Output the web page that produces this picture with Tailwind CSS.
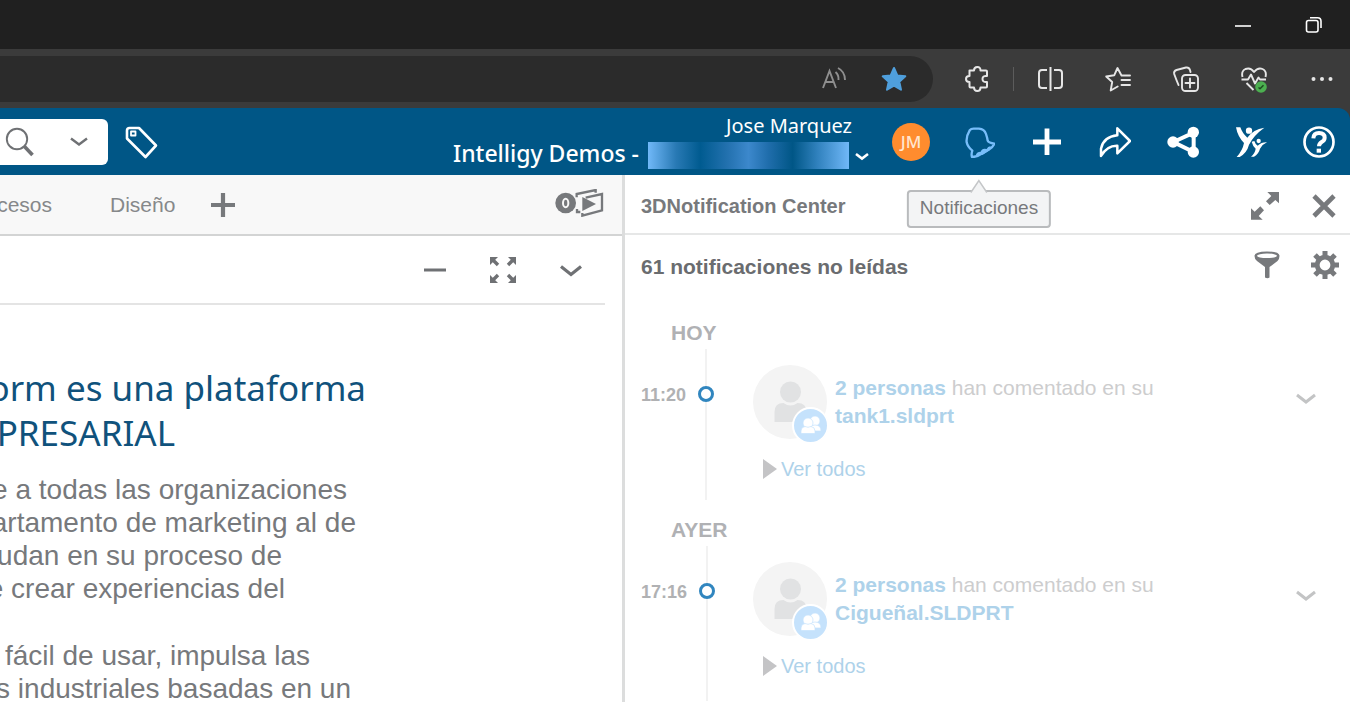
<!DOCTYPE html>
<html lang="es">
<head>
<meta charset="utf-8">
<meta name="viewport" content="width=device-width, initial-scale=1">
<title>3DNotification Center</title>
<script src="https://cdn.jsdelivr.net/npm/@tailwindcss/browser@4"></script>
</head>
<body class="flex h-screen flex-col overflow-hidden bg-white font-['Liberation_Sans',Arial,sans-serif] text-[21px] text-[#77797c]">

<!-- Window title bar -->
<div class="flex h-[49px] shrink-0 items-center justify-end bg-[#202020] text-white">
  <button aria-label="Minimizar" class="flex w-[70px] justify-center"><svg class="size-5" viewBox="0 0 20 20" fill="none" stroke="currentColor" stroke-width="1.6"><path d="M2 11h16"/></svg></button>
  <button aria-label="Restaurar" class="flex w-[72px] justify-center"><svg class="size-5" viewBox="0 0 20 20" fill="none" stroke="currentColor" stroke-width="1.6"><rect x="2.500" y="5.500" width="11.500" height="11.500" rx="2"/><path d="M6 2.800h7.500q3.500 0 3.500 3.500V13"/></svg></button>
</div>

<!-- Browser toolbar -->
<div class="flex h-[59px] shrink-0 items-center bg-[#3b3b3b] text-[#e6e6e6]">
  <div class="mr-4 flex h-[46px] flex-1 items-center justify-end gap-8 rounded-r-full bg-[#2b2b2b] pr-[25px]">
    <button aria-label="Leer en voz alta" class="text-[#8f8f8f]"><svg class="size-7" viewBox="0 0 28 28" fill="none" stroke="currentColor" stroke-width="1.900"><path d="M3 23 9.500 6 16 23M5.500 17h8M15.500 7q3.500 3 3 8M18 3q7 3.500 7 12"/></svg></button>
    <button aria-label="Favorito" class="text-[#4f9fdc]"><svg class="size-7" viewBox="0 0 28 28" fill="currentColor" stroke="currentColor" stroke-width="2" stroke-linejoin="round"><path d="m14 3 3.300 7.400 8 .9-6 5.400 1.700 8L14 20.700l-7 4 1.700-8-6-5.400 8-.9z"/></svg></button>
  </div>
  <button aria-label="Extensiones" class="flex w-14 justify-center"><svg class="size-7" viewBox="0 0 28 28" fill="none" stroke="currentColor" stroke-width="2" stroke-linejoin="round"><path d="M6.500 5.500H11q0-3.500 3.300-3.500t3.200 3.500h5.500q1 0 1 1V11q-4.500-.5-4.500 3t4.500 3v4.500q0 1-1 1h-5.500q0 3.500-3.200 3.500T11 22.500H7.500q-1 0-1-1V17Q3 17 3 14t3.500-3z"/></svg></button>
  <div class="mx-2 h-6 w-px bg-[#5c5c5c]"></div>
  <div class="flex gap-3">
    <button aria-label="Pantalla dividida" class="flex w-14 justify-center"><svg class="size-7" viewBox="0 0 28 28" fill="none" stroke="currentColor" stroke-width="2"><path d="M14.500 2v24M11 5H6Q3 5 3 8v12q0 3 3 3h5M18 5h5q3 0 3 3v12q0 3-3 3h-5"/></svg></button>
    <button aria-label="Favoritos" class="flex w-14 justify-center"><svg class="size-7" viewBox="0 0 28 28" fill="none" stroke="currentColor" stroke-width="1.900" stroke-linejoin="round" stroke-linecap="round"><path d="M26 10.500h-8.500L13.500 3l-3.300 7.300-8 1.200 6 5.500-1.500 8.500 7-4M17.500 15H26M17.500 20H26"/></svg></button>
    <button aria-label="Colecciones" class="flex w-14 justify-center"><svg class="size-7" viewBox="0 0 28 28" fill="none" stroke="currentColor" stroke-width="1.900" stroke-linejoin="round" stroke-linecap="round"><path d="M6.500 20Q4 14 2.200 9 1.500 6 4.500 5l9.500-2.500q3-.5 4 2.500l.5 2"/><rect x="10" y="10" width="16" height="16" rx="3.500"/><path d="M18 13.500v9M13.500 18h9"/></svg></button>
    <button aria-label="Rendimiento" class="flex w-14 justify-center"><svg class="size-7" viewBox="0 0 28 28" fill="none" stroke="currentColor" stroke-width="1.900" stroke-linejoin="round"><path d="M2.500 12Q1 6 5.500 4 10.500 2 14 7q4-5 8.500-3T25.500 12M1.500 14.500H8l3-5 4 9 3.500-6 1.500 2h6M6.500 18l7 7"/><circle cx="21" cy="22" r="5.800" fill="#4caf50" stroke="none"/><path d="m18.500 22.500 1.500 1.300 3.500-3.600" stroke="#1d4d20" stroke-width="1.500"/></svg></button>
    <button aria-label="Más opciones" class="flex w-14 justify-center"><svg class="size-7" viewBox="0 0 28 28" fill="currentColor"><circle cx="5.500" cy="14" r="2"/><circle cx="14" cy="14" r="2"/><circle cx="22.500" cy="14" r="2"/></svg></button>
  </div>
</div>

<!-- Platform top bar -->
<header class="flex h-[67px] shrink-0 items-center bg-[#3b3b3b]">
  <div class="flex h-full flex-1 items-center rounded-tr-xl bg-[#005686] text-white">
    <div class="flex h-[46px] w-[108px] items-center gap-[34px] rounded-r-md bg-white pl-1 text-[#6f7174]">
      <button aria-label="Buscar"><svg class="size-8" viewBox="0 0 32 32" fill="none" stroke="currentColor"><circle cx="13" cy="13" r="10.200" stroke-width="1.900"/><path d="m20.500 20.500 8 8.500" stroke-width="3.600"/></svg></button>
      <button aria-label="Opciones de búsqueda"><svg class="h-3 w-[18px]" viewBox="0 0 18 12" fill="none" stroke="currentColor" stroke-width="2.400"><path d="m1 2.500 8 6 8-6"/></svg></button>
    </div>
    <button aria-label="Etiquetas" class="ml-4"><svg class="size-[34px]" viewBox="0 0 34 34" fill="none" stroke="currentColor" stroke-width="2.600" stroke-linejoin="round"><path d="M3 5.500Q3 3 5.500 3H15l17 17.500L21.500 32 3 13.500z"/><rect x="7" y="6.500" width="4.500" height="4" stroke-width="1.800"/></svg></button>

    <div class="ml-auto font-['Noto_Sans','Open_Sans',sans-serif]">
      <div class="pr-[17px] text-right text-[20px] leading-6">Jose Marquez</div>
      <button class="mt-1 flex items-center text-[23px] font-medium">
        <span class="self-start leading-[23px]">Intelligy Demos -</span>
        <span class="ml-[9px] h-[27px] w-[201px] bg-[linear-gradient(90deg,#70b8f8_0%,#2879b4_14%,#005b90_26%,#2472b0_40%,#3c88cc_50%,#1f6dab_60%,#005686_72%,#2f80bc_84%,#70b8f8_100%)]"></span>
        <svg class="ml-[6px] h-3 w-[14px]" viewBox="0 0 14 12" fill="none" stroke="currentColor" stroke-width="2.600"><path d="m1 4 6 4.500L13 4"/></svg>
      </button>
    </div>

    <nav aria-label="Acciones" class="ml-[11px] flex gap-1.5">
      <button aria-label="Perfil" class="flex h-[38px] w-[62px] items-center justify-center"><span class="flex size-[38px] items-center justify-center rounded-full bg-[#ff8c2e] font-['Noto_Sans',sans-serif] text-[17px] font-medium text-[#ffe6d0]">JM</span></button>
      <div class="relative flex">
        <button aria-label="Notificaciones" aria-describedby="tip" class="flex w-[62px] items-center justify-center text-[#78befa]"><svg class="size-8" viewBox="0 0 96 96" fill="none" stroke="currentColor" stroke-width="7" stroke-linejoin="round"><path d="M20 13q4-5 12-5h16q16 1 21 16 4 12 5 20 2 6 20 9-4 10-14 16L57 83Q43 93 27 93q-3-8 1-19-14-11-17-25-2-18 9-36z"/><path d="M38 89q2-12 15-12 4-12 18-8 4-9 12-8l-3 12-21 13z" fill="currentColor" stroke="none"/></svg></button>
        <div id="tip" role="tooltip" class="absolute top-[67px] left-1/2 z-10 flex h-[38px] -translate-x-1/2 items-center rounded-sm border-2 border-[#b9bbbd] bg-[#f3f4f5] px-[11px] text-[19px] text-[#77797c]">
          Notificaciones
          <svg class="absolute -top-[13px] left-1/2 h-[14px] w-[18px] -translate-x-1/2" viewBox="0 0 18 14" fill="#f3f4f5" stroke="#c4c6c8" stroke-width="1.500"><path d="M1 13.500 9 1.500l8 12"/></svg>
        </div>
      </div>
      <button aria-label="Añadir" class="flex w-[62px] items-center justify-center"><svg class="size-8" viewBox="0 0 32 32" stroke="currentColor" stroke-width="4.800"><path d="M16 2.500v26.500M2 16h28"/></svg></button>
      <button aria-label="Compartir" class="flex w-[62px] items-center justify-center"><svg class="size-8" viewBox="0 0 96 96" fill="none" stroke="currentColor" stroke-width="7.500" stroke-linejoin="round"><path d="M6 90V68Q14 32 55 28V7l38 38-38 37V59Q24 58 6 90z"/></svg></button>
      <button aria-label="Comunidad" class="flex w-[62px] items-center justify-center"><svg class="size-8" viewBox="0 0 96 96" fill="currentColor" stroke="currentColor" stroke-width="12"><g stroke="none"><circle cx="18" cy="48" r="17"/><circle cx="79" cy="19" r="17"/><circle cx="79" cy="78" r="17"/></g><path d="M19 48 80 20v58z" fill="none"/></svg></button>
      <button aria-label="Social" class="flex w-[62px] items-center justify-center"><svg class="size-8" viewBox="0 0 96 96" fill="currentColor"><path d="M3 4h13q6 18 21 31Q54 10 88 5 56 28 42 56 36 80 14 93H5q18-20 22-42Q8 32 3 4z"/><circle cx="42" cy="14" r="9.500"/><path d="M50 47l8-2q3 10 10 14 12-11 28-10-14 6-21 19-4 16-18 24h-9q12-10 14-24-8-6-12-21z"/><circle cx="71" cy="45" r="6.500"/></svg></button>
      <button aria-label="Ayuda" class="flex w-[62px] items-center justify-center"><svg class="size-8" viewBox="0 0 96 96" fill="none" stroke="currentColor"><circle cx="48" cy="48" r="43.500" stroke-width="8"/><path d="M31 37q1-16 17-16 17 0 17 14 0 8-9 13-8 5-8 13" stroke-width="12"/><path d="M41 68h13v12H41z" fill="currentColor" stroke="none"/></svg></button>
    </nav>
  </div>
</header>

<div class="flex min-h-0 flex-1">
  <!-- Dashboard -->
  <main class="flex w-[625px] shrink-0 flex-col overflow-hidden border-r-[3px] border-[#dcdddd]">
    <div class="flex h-[61px] shrink-0 items-center border-b-2 border-[#d3d4d4] bg-[#f8f8f8] text-[#86888a]">
      <a href="#" class="flex w-[52px] justify-end">cesos</a>
      <a href="#" class="ml-[58px]">Diseño</a>
      <button aria-label="Nueva pestaña" class="ml-[34px]"><svg class="size-7" viewBox="0 0 28 28" stroke="#77797c" stroke-width="4.200"><path d="M14 2v24M2 14h24"/></svg></button>
      <button aria-label="Reproducir" class="mr-[17px] mb-1 ml-auto"><svg class="h-7 w-[50px]" viewBox="0 0 150 84" fill="none" stroke="#77797c"><circle cx="32" cy="42" r="31" fill="#77797c" stroke="none"/><ellipse cx="32" cy="42" rx="8" ry="13" stroke="#f8f8f8" stroke-width="6"/><path d="M65 25V15l57-12v8M66 60v9h10M92 26l49-11v49L82 80v-8" stroke-width="7"/><path d="M82 24v42l41-21z" fill="#77797c" stroke="none"/></svg></button>
    </div>
    <div class="mr-[17px] flex h-[69px] shrink-0 items-center justify-end border-b-2 border-[#e4e4e4] text-[#6f7174]">
      <button aria-label="Contraer" class="flex w-[68px] justify-center"><svg class="size-7" viewBox="0 0 28 28" stroke="currentColor" stroke-width="3"><path d="M3 14h22"/></svg></button>
      <button aria-label="Maximizar" class="flex w-[68px] justify-center"><svg class="size-7" viewBox="0 0 28 28" fill="currentColor" stroke="currentColor" stroke-width="3.400"><path d="m3 3 6 6M25 3l-6 6M3 25l6-6M25 25l-6-6" fill="none"/><path d="M1 1h8L1 9zM27 1h-8l8 8zM1 27h8l-8-8zM27 27h-8l8-8z" stroke="none"/></svg></button>
      <button aria-label="Menú del widget" class="flex w-[68px] justify-center"><svg class="size-6" viewBox="0 0 24 24" fill="none" stroke="currentColor" stroke-width="3.200"><path d="m2 8.500 10 8 10-8"/></svg></button>
    </div>
    <article class="pt-[60px] whitespace-nowrap">
      <h1 class="font-['Noto_Sans','Open_Sans',sans-serif] text-[35px] leading-[45px] text-[#10527c]">
        <span class="flex w-[366px] justify-end">orm es una plataforma</span>
        <span class="flex w-[175px] justify-end">PRESARIAL</span>
      </h1>
      <p class="mt-[18px] text-[28px] leading-[33px]">
        <span class="flex w-[347px] justify-end">e a todas las organizaciones</span>
        <span class="flex w-[356px] justify-end">artamento de marketing al de</span>
        <span class="flex w-[282px] justify-end">udan en su proceso de</span>
        <span class="flex w-[285px] justify-end">e crear experiencias del</span>
      </p>
      <p class="mt-[34px] text-[28px] leading-[33px]">
        <span class="flex w-[310px] justify-end">y fácil de usar, impulsa las</span>
        <span class="flex w-[351px] justify-end">s industriales basadas en un</span>
      </p>
    </article>
  </main>

  <!-- Notification panel -->
  <aside class="flex min-w-0 flex-1 flex-col overflow-hidden">
    <div class="flex h-[60px] shrink-0 items-center border-b-2 border-[#e6e7e7] pt-[3px] pl-4">
      <h2 class="text-[20px] font-bold">3DNotification Center</h2>
      <button aria-label="Ampliar" class="mr-8 ml-auto"><svg class="size-[30px]" viewBox="0 0 90 90" fill="currentColor"><path d="M52 3h35v34L76 27 59 42 48 31l16-16zM38 86H3V52l11 10 17-16 11 12-16 17z"/></svg></button>
      <button aria-label="Cerrar" class="mr-[14px]"><svg class="size-6" viewBox="0 0 24 24" stroke="currentColor" stroke-width="4.600"><path d="m2 2 20 20M22 2 2 22"/></svg></button>
    </div>
    <div class="flex h-16 shrink-0 items-center pl-4">
      <p class="font-bold text-[#6a6c6f]">61 notificaciones no leídas</p>
      <button aria-label="Filtrar" class="mr-[30px] mb-1 ml-auto"><svg class="size-7" viewBox="0 0 28 28"><path d="M1.500 5q0-4.500 12.500-4.500T26.500 5q0 3-2 5l-8 6v10.500q-2 1.500-4.500 0V16L4 10Q1.500 8 1.500 5z" fill="currentColor"/><ellipse cx="14" cy="4.800" rx="10" ry="2.300" fill="#fff"/></svg></button>
      <button aria-label="Ajustes" class="mr-[11px] mb-1"><svg class="size-7" viewBox="0 0 28 28" fill="none" stroke="currentColor"><circle cx="14" cy="14" r="7.800" stroke-width="4.800"/><path d="M14 0v5M14 23v5M0 14h5M23 14h5M4 4l4 4M20 20l4 4M24 4l-4 4M8 20l-4 4" stroke-width="5"/></svg></button>
    </div>

    <section class="mt-[22px] shrink-0 pb-[18px]">
      <h3 class="pl-[46px] leading-6 font-bold text-[#b0b1b4]">HOY</h3>
      <div class="relative mt-1 flex h-[151px] items-start pt-4 pl-4">
        <div class="absolute inset-y-0 left-[80px] w-0.5 bg-[#f2f2f2]"></div>
        <time class="mt-[18px] w-[57px] text-[18px] leading-6 font-bold text-[#b0b1b3]">11:20</time>
        <span class="relative mt-[21px] size-4 rounded-full border-3 border-[#3186bf] bg-white"></span>
        <div class="ml-[39px]">
          <div class="flex">
            <div class="relative size-[74px]">
              <svg class="size-full" viewBox="0 0 74 74"><circle cx="37" cy="37" r="37" fill="#f4f4f4"/><circle cx="37.500" cy="27" r="10.500" fill="#e1e2e3"/><path d="M21.500 57V47q0-9 9-9 7 5 14 0 9 0 9 9v10z" fill="#e1e2e3"/></svg>
              <svg class="absolute -right-0.5 -bottom-[5px] size-[37px]" viewBox="0 0 37 37"><circle cx="18.500" cy="18.500" r="17.500" fill="#c5e2fc" stroke="#fff" stroke-width="2"/><g fill="#fff" stroke="#c5e2fc" stroke-width=".7"><circle cx="23" cy="14" r="5"/><path d="M17 24q0-6 6-6t6 6z"/><circle cx="16" cy="16" r="5"/><path d="M9 26.500V24q0-4 4-4.500 3 1.500 6 0 4 .5 4 4.500v2.500z"/></g></svg>
            </div>
            <p class="mt-[9px] ml-2 leading-7 text-[#cdcdce]"><a href="#" class="font-bold text-[#aed2ea]">2 personas</a> han comentado en su<br><a href="#" class="font-bold text-[#aed2ea]">tank1.sldprt</a></p>
          </div>
          <button class="mt-[18px] ml-[10px] flex items-center gap-1 text-[20px] leading-6 text-[#aed2ea]"><svg class="h-5 w-[14px]" viewBox="0 0 14 20" fill="#c4c4c6"><path d="M0 0v20l14-10z"/></svg>Ver todos</button>
        </div>
        <button aria-label="Desplegar" class="mt-7 mr-[34px] ml-auto text-[#c3c4c5]"><svg class="h-3 w-5" viewBox="0 0 20 12" fill="none" stroke="currentColor" stroke-width="3"><path d="m1 2 9 7 9-7"/></svg></button>
      </div>
    </section>

    <section class="shrink-0 pb-[18px]">
      <h3 class="pl-[46px] leading-6 font-bold text-[#b0b1b4]">AYER</h3>
      <div class="relative mt-1 flex h-[155px] items-start pt-4 pl-4">
        <div class="absolute inset-y-0 left-[81px] w-0.5 bg-[#f2f2f2]"></div>
        <time class="mt-[18px] w-[58px] text-[18px] leading-6 font-bold text-[#b0b1b3]">17:16</time>
        <span class="relative mt-[21px] size-4 rounded-full border-3 border-[#3186bf] bg-white"></span>
        <div class="ml-[38px]">
          <div class="flex">
            <div class="relative size-[74px]">
              <svg class="size-full" viewBox="0 0 74 74"><circle cx="37" cy="37" r="37" fill="#f4f4f4"/><circle cx="37.500" cy="27" r="10.500" fill="#e1e2e3"/><path d="M21.500 57V47q0-9 9-9 7 5 14 0 9 0 9 9v10z" fill="#e1e2e3"/></svg>
              <svg class="absolute -right-0.5 -bottom-[5px] size-[37px]" viewBox="0 0 37 37"><circle cx="18.500" cy="18.500" r="17.500" fill="#c5e2fc" stroke="#fff" stroke-width="2"/><g fill="#fff" stroke="#c5e2fc" stroke-width=".7"><circle cx="23" cy="14" r="5"/><path d="M17 24q0-6 6-6t6 6z"/><circle cx="16" cy="16" r="5"/><path d="M9 26.500V24q0-4 4-4.500 3 1.500 6 0 4 .5 4 4.500v2.500z"/></g></svg>
            </div>
            <p class="mt-[9px] ml-2 leading-7 text-[#cdcdce]"><a href="#" class="font-bold text-[#aed2ea]">2 personas</a> han comentado en su<br><a href="#" class="font-bold text-[#aed2ea]">Cigueñal.SLDPRT</a></p>
          </div>
          <button class="mt-[18px] ml-[10px] flex items-center gap-1 text-[20px] leading-6 text-[#aed2ea]"><svg class="h-5 w-[14px]" viewBox="0 0 14 20" fill="#c4c4c6"><path d="M0 0v20l14-10z"/></svg>Ver todos</button>
        </div>
        <button aria-label="Desplegar" class="mt-7 mr-[34px] ml-auto text-[#c3c4c5]"><svg class="h-3 w-5" viewBox="0 0 20 12" fill="none" stroke="currentColor" stroke-width="3"><path d="m1 2 9 7 9-7"/></svg></button>
      </div>
    </section>
  </aside>
</div>
</body>
</html>
